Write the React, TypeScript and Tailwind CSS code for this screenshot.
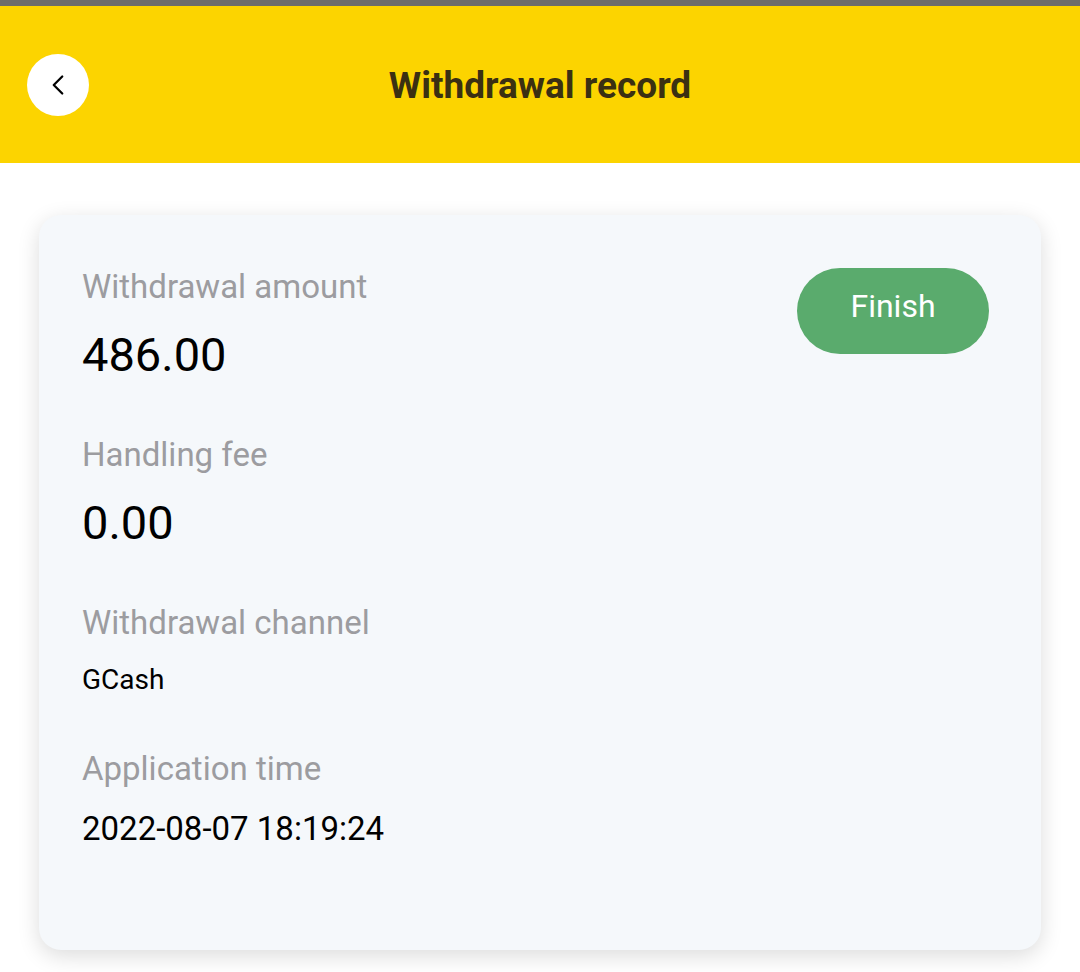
import { ChevronLeft } from 'lucide-react'

const rows = [
  { label: 'Withdrawal amount', value: '486.00', size: 'text-[47px] leading-[56px]' },
  { label: 'Handling fee', value: '0.00', size: 'text-[47px] leading-[56px]' },
  { label: 'Withdrawal channel', value: 'GCash', size: 'text-[28px] leading-[34px]' },
  { label: 'Application time', value: '2022-08-07 18:19:24', size: 'text-[33px] leading-[40px]' },
]

export default function App() {
  return (
    <div className="w-[1080px] h-[972px] bg-white overflow-hidden font-['Roboto',sans-serif]">
      <div className="h-[6px] bg-[#6e6d6a]" />
      <header className="h-[157px] bg-[#fcd400] flex items-center relative">
        <button className="ml-[27px] w-[62px] h-[62px] rounded-full bg-white flex items-center justify-center">
          <ChevronLeft className="w-[34px] h-[34px] text-black" strokeWidth={1.6} />
        </button>
        <h1 className="absolute left-0 right-0 pt-[3px] text-center text-[37px] font-bold text-[#3b3012] pointer-events-none">
          Withdrawal record
        </h1>
      </header>

      <div className="px-[39px] pt-[52px]">
        <div className="relative h-[735px] rounded-[22px] bg-[#f5f8fb] shadow-[0_6px_22px_rgba(0,0,0,0.14)] pl-[43px] pt-[50px]">
          <div className="absolute right-[52px] top-[53px] w-[192px] h-[86px] rounded-full bg-[#5aab6d] flex items-center justify-center pb-[10px] text-white text-[32px]">
            Finish
          </div>
          {rows.map((r) => (
            <div key={r.label} className="mb-[50px]">
              <div className="text-[33px] text-[#9c9ca0] leading-[44px]">{r.label}</div>
              <div className={`${r.size} text-black mt-[18px]`}>{r.value}</div>
            </div>
          ))}
        </div>
      </div>
    </div>
  )
}
